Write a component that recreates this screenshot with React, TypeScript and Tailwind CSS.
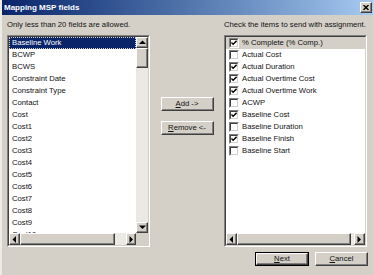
import type { ReactNode } from 'react';

const leftItems = [
  'Baseline Work',
  'BCWP',
  'BCWS',
  'Constraint Date',
  'Constraint Type',
  'Contact',
  'Cost',
  'Cost1',
  'Cost2',
  'Cost3',
  'Cost4',
  'Cost5',
  'Cost6',
  'Cost7',
  'Cost8',
  'Cost9',
  'Cost10',
];

const rightItems = [
  { name: '% Complete (% Comp.)', checked: true },
  { name: 'Actual Cost', checked: false },
  { name: 'Actual Duration', checked: true },
  { name: 'Actual Overtime Cost', checked: true },
  { name: 'Actual Overtime Work', checked: true },
  { name: 'ACWP', checked: false },
  { name: 'Baseline Cost', checked: true },
  { name: 'Baseline Duration', checked: false },
  { name: 'Baseline Finish', checked: true },
  { name: 'Baseline Start', checked: false },
];

const raised =
  'bg-[#d4d0c8] border border-t-white border-l-white border-r-[#404040] border-b-[#404040] shadow-[inset_-1px_-1px_0_#808080]';

function Arrow({ dir }: { dir: 'up' | 'down' | 'left' | 'right' }) {
  const pts = {
    up: '0,4 3.5,0.5 7,4',
    down: '0,0.5 3.5,4 7,0.5',
    left: '4,0 0.5,3.5 4,7',
    right: '0.5,0 4,3.5 0.5,7',
  }[dir];
  const vert = dir === 'up' || dir === 'down';
  return (
    <svg width={vert ? 7 : 5} height={vert ? 5 : 7} viewBox={vert ? '0 0 7 5' : '0 0 5 7'}>
      <polygon points={pts} fill="#000" />
    </svg>
  );
}

function ScrollBtn({ dir, className = '' }: { dir: 'up' | 'down' | 'left' | 'right'; className?: string }) {
  return (
    <div className={`${raised} flex items-center justify-center shrink-0 ${className}`}>
      <Arrow dir={dir} />
    </div>
  );
}

function Sunken({ children, className = '' }: { children: ReactNode; className?: string }) {
  return (
    <div className={`border border-t-[#808080] border-l-[#808080] border-r-white border-b-white ${className}`}>
      <div className="w-full h-full border border-t-[#404040] border-l-[#404040] border-r-[#d4d0c8] border-b-[#d4d0c8] bg-white overflow-hidden">
        {children}
      </div>
    </div>
  );
}

function CheckBox({ checked }: { checked: boolean }) {
  return (
    <div className="w-[10px] h-[10px] shrink-0 border border-t-[#808080] border-l-[#808080] border-r-white border-b-white">
      <div className="w-full h-full border border-t-[#404040] border-l-[#404040] border-r-[#d4d0c8] border-b-[#d4d0c8] bg-white flex items-center justify-center">
        {checked && (
          <svg width="6" height="6" viewBox="0 0 7 7">
            <path d="M0.5 3 L2.5 5 L6.5 1" stroke="#000" strokeWidth="1.6" fill="none" />
          </svg>
        )}
      </div>
    </div>
  );
}

function Button({ children, wide, isDefault }: { children: ReactNode; wide: string; isDefault?: boolean }) {
  return (
    <div className={`${wide} h-[14px] ${isDefault ? 'border border-black' : ''}`}>
      <div className={`${raised} w-full h-full flex items-center justify-center leading-none`}>{children}</div>
    </div>
  );
}

export default function App() {
  return (
    <div className="w-[373px] h-[275px] bg-[#d4d0c8] overflow-hidden font-['Liberation_Sans',Arial,sans-serif] text-[7.7px] text-[#111] border-l-2 border-l-[#eeece6]">
      <div className="h-[15px] bg-linear-to-r from-[#0a246a] to-[#a6caf0] flex items-center justify-between pl-[2px] pr-[1px]">
        <span className="text-white font-bold text-[8px]">Mapping MSP fields</span>
        <div className={`${raised} w-[12px] h-[11px] flex items-center justify-center`}>
          <svg width="6" height="5" viewBox="0 0 6 5">
            <path d="M0.5 0 L5.5 5 M5.5 0 L0.5 5" stroke="#000" strokeWidth="1.4" />
          </svg>
        </div>
      </div>

      <div className="pl-[5px] grid grid-cols-[143px_53px_143px] gap-x-[10.5px] grid-rows-[11px_212px] gap-y-[5px] pt-[4px]">
        <div className="leading-[11px]">Only less than 20 fields are allowed.</div>
        <div />
        <div className="leading-[11px]">Check the items to send with assignment.</div>

        <Sunken className="w-[143px] h-[212px]">
          <div className="grid grid-cols-[1fr_12px] grid-rows-[1fr_12px] w-full h-full">
            <div className="overflow-hidden">
              {leftItems.map((item, i) => (
                <div
                  key={item}
                  className={`h-[12px] leading-[12px] pl-[3px] whitespace-nowrap ${
                    i === 0 ? 'bg-[#0a246a] text-white outline outline-dotted outline-[#d4d0c8] -outline-offset-1' : ''
                  }`}
                >
                  {item}
                </div>
              ))}
            </div>
            <div className="flex flex-col bg-[#ebe9e4]">
              <ScrollBtn dir="up" className="h-[11px]" />
              <div className={`${raised} h-[20px]`} />
              <div className="flex-1" />
              <ScrollBtn dir="down" className="h-[11px]" />
            </div>
            <div className="flex bg-[#ebe9e4]">
              <ScrollBtn dir="left" className="w-[11px]" />
              <div className={`${raised} w-[95px]`} />
              <div className="flex-1" />
              <ScrollBtn dir="right" className="w-[10px]" />
            </div>
            <div className="bg-[#d4d0c8]" />
          </div>
        </Sunken>

        <div className="flex flex-col gap-[10px] pt-[62px]">
          <Button wide="w-[53px]">
            <span>
              <span className="underline">A</span>dd -&gt;
            </span>
          </Button>
          <Button wide="w-[53px]">
            <span>
              <span className="underline">R</span>emove &lt;-
            </span>
          </Button>
        </div>

        <Sunken className="w-[143px] h-[212px]">
          <div className="flex flex-col w-full h-full">
            <div className="flex-1 overflow-hidden">
              {rightItems.map((item, i) => (
                <div
                  key={item.name}
                  className={`h-[12px] flex items-center gap-[3px] pl-[3px] whitespace-nowrap ${
                    i === 0 ? 'bg-[#d4d0c8]' : ''
                  }`}
                >
                  <CheckBox checked={item.checked} />
                  <span className="leading-[12px]">{item.name}</span>
                </div>
              ))}
            </div>
            <div className="h-[12px] flex bg-[#ebe9e4]">
              <ScrollBtn dir="left" className="w-[11px]" />
              <div className={`${raised} flex-1`} />
              <div className="w-[3px]" />
              <ScrollBtn dir="right" className="w-[11px]" />
            </div>
          </div>
        </Sunken>
      </div>

      <div className="flex justify-end gap-[6px] pr-[5px] mt-[5px]">
        <Button wide="w-[54px]" isDefault>
          <span>
            <span className="underline">N</span>ext
          </span>
        </Button>
        <Button wide="w-[53px]">
          <span>
            <span className="underline">C</span>ancel
          </span>
        </Button>
      </div>
    </div>
  );
}
